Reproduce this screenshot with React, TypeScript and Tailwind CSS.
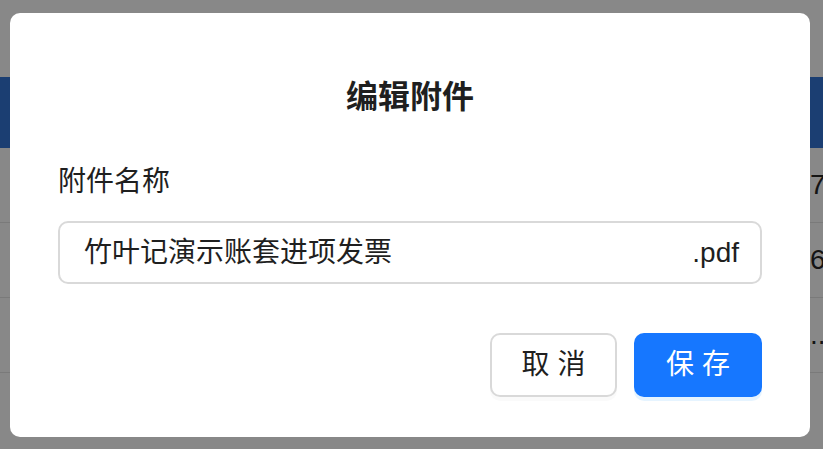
const FONT = { fontFamily: '"Liberation Sans", "Noto Sans CJK SC", sans-serif' };

const ROWS = [
  { text: "73", extra: "" },
  { text: "6", extra: "l" },
  { text: "..0", extra: "" },
];

export default function App() {
  return (
    <div className="relative h-[449px] w-[823px] overflow-hidden bg-[#888888]" style={FONT}>
      {/* dimmed page behind the dialog */}
      <div className="h-[77px]" />
      <div className="h-[71px] bg-[#1b3e72]" />
      {ROWS.map((r, i) => (
        <div
          key={i}
          className="flex h-[75px] items-center border-b border-[#7a7a7a] pl-[810px] text-[28px] text-[#141414]"
        >
          <span className="whitespace-nowrap">
            {r.text}
            {r.extra && <span className="text-[#8a5a12]">{r.extra}</span>}
          </span>
        </div>
      ))}

      {/* modal */}
      <div className="absolute left-[10px] top-[13px] flex h-[424px] w-[800px] flex-col rounded-[10px] bg-white px-[48px] pt-[62px]">
        <h2 className="h-[44px] text-center text-[32px] font-bold leading-[44px] text-[#1f1f1f]">
          编辑附件
        </h2>

        <label className="mt-[42px] h-[42px] text-[28px] leading-[42px] text-[#1f1f1f]">
          附件名称
        </label>

        <div className="mt-[18px] flex h-[63px] items-center justify-between rounded-[10px] border-2 border-[#d9d9d9] pl-[24px] pr-[21px] text-[28px] text-[#1f1f1f]">
          <span>竹叶记演示账套进项发票</span>
          <span>.pdf</span>
        </div>

        <div className="mt-[49px] flex justify-end gap-[17px]">
          <button className="h-[64px] w-[127px] rounded-[10px] border-2 border-[#d9d9d9] bg-white text-[28px] tracking-[8px] text-[#1f1f1f] shadow-[0_4px_0_rgba(0,0,0,0.02)]">
            <span className="pl-[8px]">取消</span>
          </button>
          <button className="h-[64px] w-[128px] rounded-[10px] bg-[#1677ff] text-[28px] tracking-[8px] text-white shadow-[0_4px_0_rgba(5,145,255,0.1)]">
            <span className="pl-[8px]">保存</span>
          </button>
        </div>
      </div>
    </div>
  );
}
